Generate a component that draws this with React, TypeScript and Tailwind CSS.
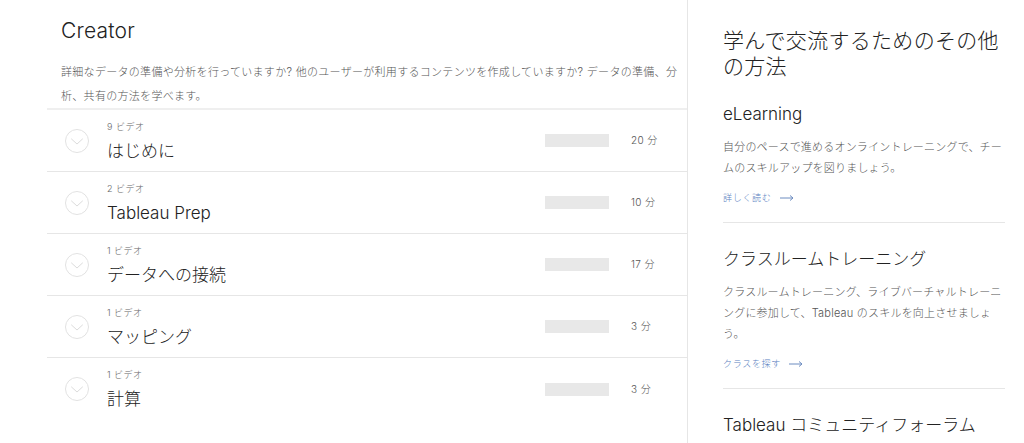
const font = {
  fontFamily: 'Inter, "Noto Sans CJK JP", sans-serif',
};

const lessons = [
  { count: "9 ビデオ", title: "はじめに", minutes: "20 分" },
  { count: "2 ビデオ", title: "Tableau Prep", minutes: "10 分" },
  { count: "1 ビデオ", title: "データへの接続", minutes: "17 分" },
  { count: "1 ビデオ", title: "マッピング", minutes: "3 分" },
  { count: "1 ビデオ", title: "計算", minutes: "3 分" },
];

const others = [
  {
    title: "eLearning",
    description:
      "自分のペースで進めるオンライントレーニングで、チームのスキルアップを図りましょう。",
    link: "詳しく読む",
  },
  {
    title: "クラスルームトレーニング",
    description:
      "クラスルームトレーニング、ライブバーチャルトレーニングに参加して、Tableau のスキルを向上させましょう。",
    link: "クラスを探す",
  },
  {
    title: "Tableau コミュニティフォーラム",
  },
];

const ChevronCircle = () => (
  <svg width="24" height="24" viewBox="0 0 24 24" fill="none">
    <circle cx="12" cy="12" r="11.5" stroke="#e2e2e2" strokeWidth="1" />
    <path
      d="M6.5 10 L12 15 L17.5 10"
      stroke="#dcdcdc"
      strokeWidth="1"
      strokeLinecap="round"
      strokeLinejoin="round"
    />
  </svg>
);

const Arrow = () => (
  <svg width="14" height="6" viewBox="0 0 14 6" fill="none">
    <path d="M0 3 H13 M10 0.5 L13 3 L10 5.5" stroke="#6d8cc0" strokeWidth="1" />
  </svg>
);

type Other = { title: string; description?: string; link?: string };

const App: React.FC = () => {
  return (
    <div className="flex h-[443px] overflow-hidden bg-white font-light" style={font}>
      {/* コース一覧 */}
      <section className="w-[687px] shrink-0 pl-[47px]">
        <div className="pl-[14px] pt-[17px]">
          <h2 className="text-[21px] leading-[28px] text-[#222] tracking-[0.2px]">
            Creator
          </h2>
          <p className="mt-[15px] text-[11px] leading-[24px] text-[#555] tracking-[0.3px]">
            <span className="whitespace-nowrap">
              詳細なデータの準備や分析を行っていますか? 他のユーザーが利用するコンテンツを作成していますか? データの準備、分
            </span>
            <br />
            析、共有の方法を学べます。
          </p>
        </div>
        <div className="border-t-2 border-[#efefef]">
          {lessons.map((item, idx) => (
            <div
              key={idx}
              className={
                "flex h-[62px] items-center " +
                (idx < lessons.length - 1 ? "border-b border-[#e6e6e6]" : "")
              }
            >
              <div className="ml-[18px] mr-[18px] flex items-center">
                <ChevronCircle />
              </div>
              <div className="flex-1 self-start pt-[11px]">
                <div className="text-[9px] leading-[12px] text-[#666] tracking-[0.5px]">
                  {item.count}
                </div>
                <div className="mt-[7px] text-[17px] leading-[22px] text-[#222]">
                  {item.title}
                </div>
              </div>
              <div className="h-[13px] w-[64px] bg-[#e8e8e8]" />
              <div className="w-[78px] pl-[22px] text-[10px] text-[#555] tracking-[0.4px]">
                {item.minutes}
              </div>
            </div>
          ))}
        </div>
      </section>

      {/* その他の方法 */}
      <aside className="flex-1 border-l border-[#e6e6e6] pl-[35px] pr-[19px] pt-[28px]">
        <h2 className="text-[21px] leading-[26px] text-[#222] tracking-[0.3px]">
          学んで交流するためのその他の方法
        </h2>
        <div className="mt-[23px]">
          {(others as Other[]).map((item, idx) => (
            <div
              key={idx}
              className={
                "pb-[17px] " +
                (idx > 0 ? "border-t border-[#e6e6e6] pt-[25px]" : "")
              }
            >
              <h3 className="text-[17px] leading-[22px] text-[#222]">
                {item.title}
              </h3>
              {item.description && (
                <p className="mt-[12px] text-[11px] leading-[21px] text-[#555] tracking-[0.2px]">
                  {item.description}
                </p>
              )}
              {item.link && (
                <a
                  href="#"
                  className="mt-[12px] flex items-center gap-[8px] text-[9px] leading-[14px] text-[#5a7fbf] tracking-[0.7px]"
                >
                  {item.link}
                  <Arrow />
                </a>
              )}
            </div>
          ))}
        </div>
      </aside>
    </div>
  );
};

export default App;
